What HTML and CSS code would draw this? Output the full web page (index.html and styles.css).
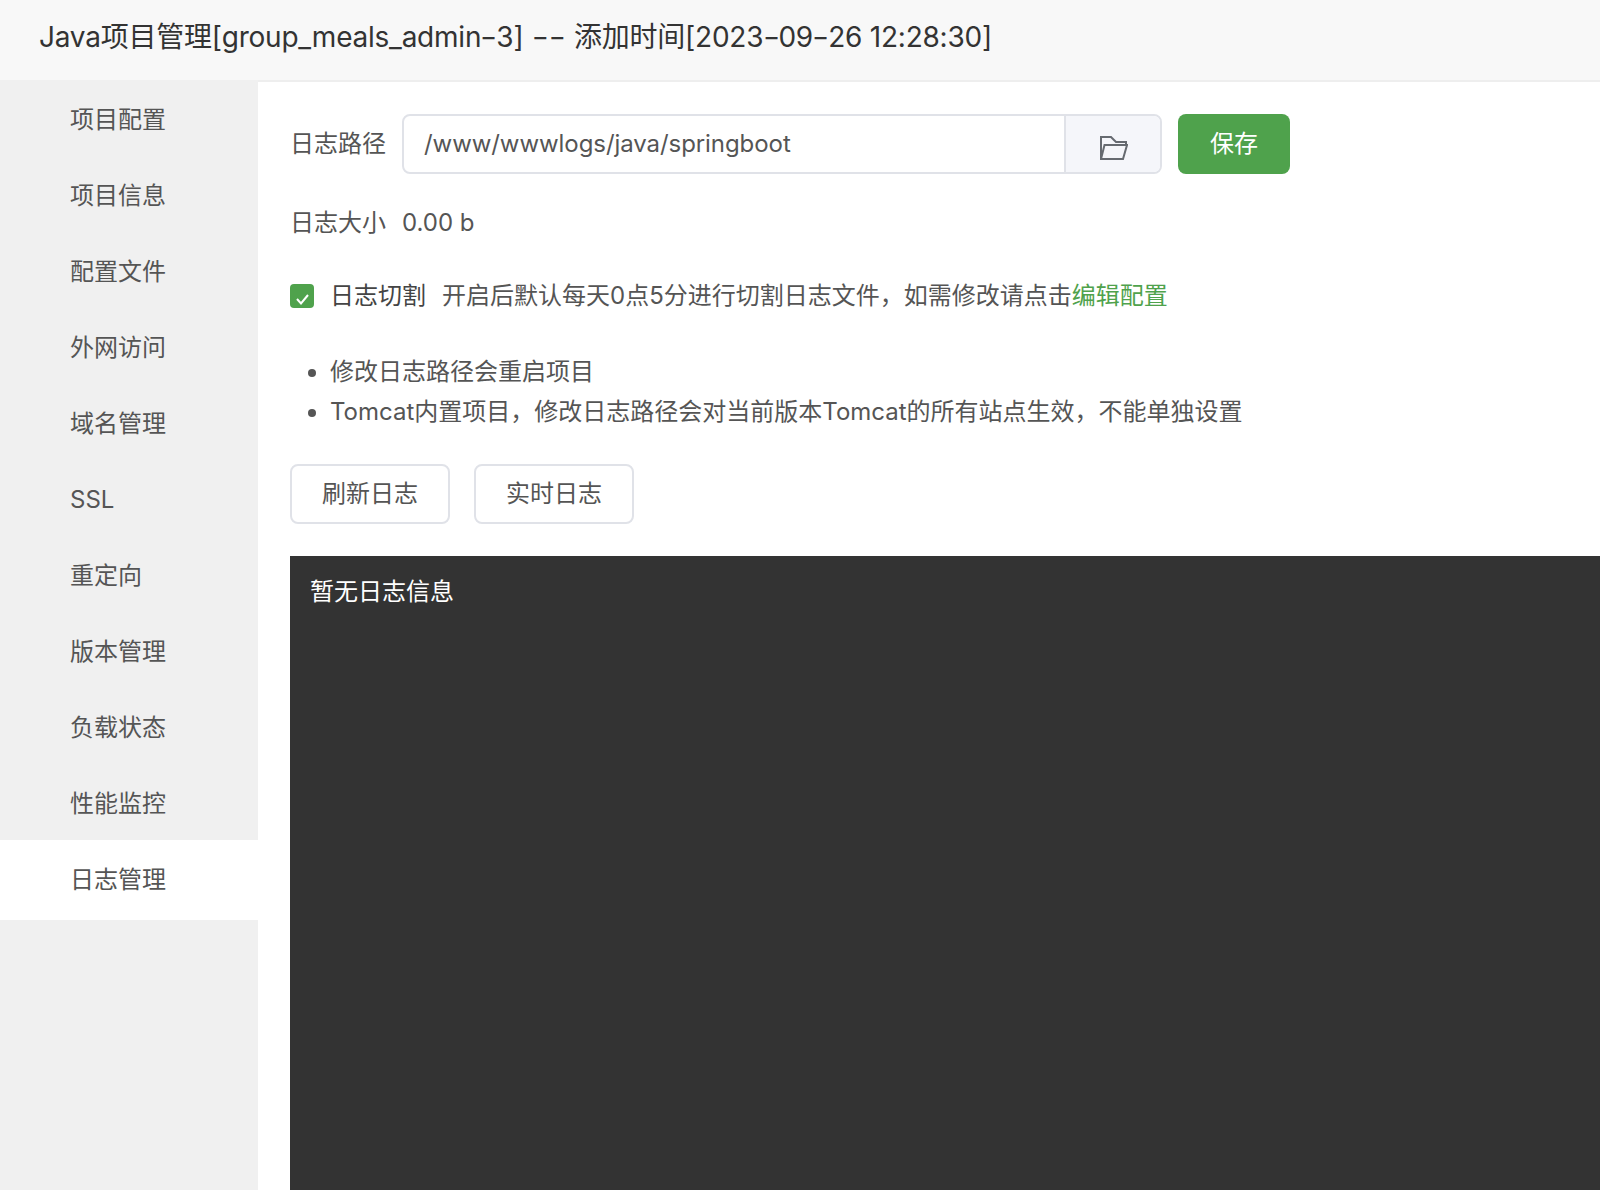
FILE: index.html
```html
<!DOCTYPE html>
<html lang="zh-CN">
<head>
<meta charset="utf-8">
<title>Java项目管理</title>
<link rel="stylesheet" href="styles.css">
</head>
<body>
<header class="title-bar">Java项目管理[group_meals_admin<span class="dash">-</span>3] <span class="dash dash-pair">--</span> 添加时间[2023<span class="dash">-</span>09<span class="dash">-</span>26 12:28:30]</header>
<div class="main">
  <nav class="side">
    <a class="side-item">项目配置</a>
    <a class="side-item">项目信息</a>
    <a class="side-item">配置文件</a>
    <a class="side-item">外网访问</a>
    <a class="side-item">域名管理</a>
    <a class="side-item">SSL</a>
    <a class="side-item">重定向</a>
    <a class="side-item">版本管理</a>
    <a class="side-item">负载状态</a>
    <a class="side-item">性能监控</a>
    <a class="side-item active">日志管理</a>
  </nav>
  <section class="content">
    <div class="path-row">
      <span class="label">日志路径</span>
      <div class="input-group">
        <span class="path-input">/www/wwwlogs/java/springboot</span>
        <span class="folder-btn">
          <svg class="folder-icon" width="28" height="24" viewBox="0 0 28 24" fill="none" stroke="#666a70" stroke-width="2"><path d="M1 23V1h10l5 5h10v3"/><path d="M1 23h22l4-14H4.500z"/></svg>
        </span>
      </div>
      <button class="btn-save">保存</button>
    </div>
    <div class="size-row"><span class="label">日志大小</span><span>0.00 b</span></div>
    <div class="cut-row">
      <span class="check"><svg width="24" height="24" viewBox="0 0 24 24" fill="none" stroke="#fff" stroke-width="2"><path d="M7 15l4 4.500 7-8.500"/></svg></span>
      <span class="cut-label">日志切割</span>
      <span>开启后默认每天0点5分进行切割日志文件，如需修改请点击<a class="link">编辑配置</a></span>
    </div>
    <ul class="tips">
      <li>修改日志路径会重启项目</li>
      <li>Tomcat内置项目，修改日志路径会对当前版本Tomcat的所有站点生效，不能单独设置</li>
    </ul>
    <div class="actions">
      <button class="btn">刷新日志</button>
      <button class="btn">实时日志</button>
    </div>
    <div class="log">暂无日志信息</div>
  </section>
</div>
</body>
</html>
```
FILE: styles.css
```css
html, body { margin: 0; height: 100%; overflow: hidden; }
body { width: 1600px; height: 1190px; font-family: Inter, "Noto Sans CJK SC", sans-serif; color: #555; font-size: 24px; line-height: 56px; background: #fff; }
.title-bar { height: 80px; line-height: 74px; padding-left: 39px; font-size: 28px; letter-spacing: -0.23px; color: #333; background: #f8f8f8; border-bottom: 2px solid #eee; }
.dash { display: inline-block; margin: 0 1.250px; line-height: 1; transform: scaleX(1.33); }
.dash-pair { margin: 0 5px; }
.main { display: flex; height: 1108px; }
.side { width: 258px; background: #f0f0f0; flex: none; margin-top: -2px; }
.side-item { display: block; height: 76px; line-height: 80px; padding-left: 70px; color: #555; }
.side-item.active { background: #fff; height: 80px; }
.content { flex: 1; padding: 32px 0 0 32px; min-width: 0; }
.path-row { display: flex; align-items: center; height: 60px; }
.label { width: 112px; flex: none; }
.input-group { display: flex; width: 760px; height: 60px; box-sizing: border-box; border: 2px solid #e0e2e8; border-radius: 8px; overflow: hidden; }
.path-input { flex: 1; padding-left: 20px; letter-spacing: -0.07px; }
.folder-btn { width: 94px; background: #f5f6fa; border-left: 2px solid #e0e2e8; display: flex; align-items: center; justify-content: center; }
.folder-icon { margin: 8px 0 0 2px; }
.btn-save { width: 112px; height: 60px; margin-left: 16px; padding: 0; border: 0; border-radius: 8px; background: #4fa24c; color: #fff; font: inherit; }
.size-row { display: flex; margin-top: 21px; }
.cut-row { display: flex; align-items: center; margin-top: 17px; height: 56px; }
.check { width: 24px; height: 24px; border-radius: 4px; background: #4fa24c; margin-right: 16px; flex: none; }
.check svg { display: block; }
.cut-label { margin-right: 16px; color: #444; }
.link { color: #4fa24c; }
.tips { margin: 28px 0 0; padding-left: 40px; line-height: 40px; }
.actions { display: flex; gap: 24px; margin-top: 32px; }
.btn { width: 160px; height: 60px; padding: 0; background: #fff; border: 2px solid #e0e2e8; border-radius: 8px; color: #555; font: inherit; }
.log { margin-top: 32px; height: 640px; background: #333; color: #fff; padding: 16px 20px; line-height: 40px; }
```
